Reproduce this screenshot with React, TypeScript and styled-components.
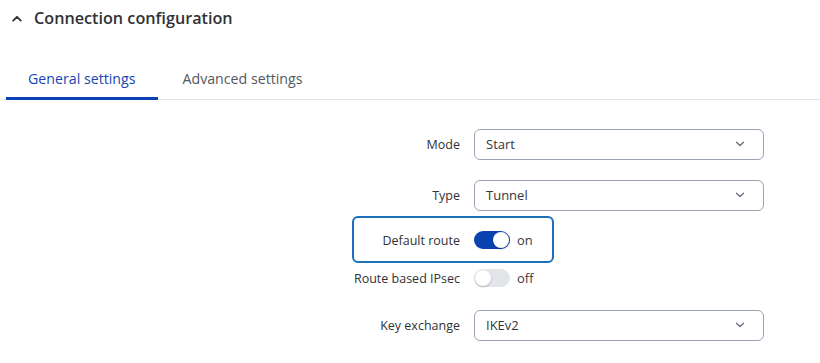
import React, { useState } from 'react';
import styled, { createGlobalStyle } from 'styled-components';

const GlobalStyle = createGlobalStyle`
  body {
    margin: 0;
    background: #ffffff;
    font-family: 'Open Sans', 'Noto Sans', sans-serif;
    color: #2f3236;
  }
`;

type SelectFieldProps = { label: string; value: string; gap: number };

const SelectField: React.FC<SelectFieldProps> = ({ label, value, gap }) => (
  <Row $gap={gap}>
    <Label>{label}</Label>
    <Select>
      <span>{value}</span>
      <svg width="10" height="6" viewBox="0 0 10 6">
        <path d="M1.5 1.2 L5 4.6 L8.5 1.2" fill="none" stroke="#6b7280" strokeWidth="1.4" strokeLinecap="round" strokeLinejoin="round" />
      </svg>
    </Select>
  </Row>
);

type ToggleFieldProps = { label: string; initial: boolean; gap: number; highlighted?: boolean };

const ToggleField: React.FC<ToggleFieldProps> = ({ label, initial, gap, highlighted }) => {
  const [on, setOn] = useState(initial);
  return (
    <Row $gap={gap} $highlighted={highlighted}>
      <Label>{label}</Label>
      <ToggleWrap>
        <Switch $on={on} onClick={() => setOn(!on)}>
          <Knob $on={on} />
        </Switch>
        <State>{on ? 'on' : 'off'}</State>
      </ToggleWrap>
    </Row>
  );
};

const App: React.FC = () => {
  const [tab, setTab] = useState(0);
  return (
    <>
      <GlobalStyle />
      <Page>
        <SectionHeader>
          <svg width="10" height="7" viewBox="0 0 10 7">
            <path d="M1.2 5.6 L5 1.8 L8.8 5.6" fill="none" stroke="#2f3236" strokeWidth="1.8" strokeLinecap="round" strokeLinejoin="round" />
          </svg>
          <Title>Connection configuration</Title>
        </SectionHeader>
        <Tabs>
          <Tab $active={tab === 0} onClick={() => setTab(0)}>General settings</Tab>
          <Tab $active={tab === 1} onClick={() => setTab(1)}>Advanced settings</Tab>
        </Tabs>
        <Form>
          <SelectField label="Mode" value="Start" gap={0} />
          <SelectField label="Type" value="Tunnel" gap={19} />
          <ToggleField label="Default route" initial={true} gap={13} highlighted />
          <ToggleField label="Route based IPsec" initial={false} gap={6} />
          <SelectField label="Key exchange" value="IKEv2" gap={15} />
        </Form>
      </Page>
    </>
  );
};

export default App;

const Page = styled.div`
  width: 820px;
  height: 363px;
  overflow: hidden;
`;

const SectionHeader = styled.div`
  display: flex;
  align-items: center;
  gap: 12px;
  height: 36px;
  padding-left: 12px;
`;

const Title = styled.h2`
  margin: 0;
  font-size: 16.2px;
  font-weight: 600;
  color: #2f3236;
`;

const Tabs = styled.div`
  display: flex;
  gap: 3px;
  margin-top: 22px;
  padding-left: 6px;
  border-bottom: 1px solid #e3e5e8;
`;

const Tab = styled.button<{ $active?: boolean }>`
  height: 42px;
  margin-bottom: -1px;
  padding: 1px 22px 0 22px;
  background: none;
  border: none;
  border-bottom: 3px solid ${p => (p.$active ? '#0a43b3' : 'transparent')};
  font-family: inherit;
  font-size: 14.2px;
  color: ${p => (p.$active ? '#1746b0' : '#54585e')};
  cursor: pointer;
`;

const Form = styled.div`
  display: flex;
  flex-direction: column;
  padding-top: 28px;
`;

const Row = styled.div<{ $gap: number; $highlighted?: boolean }>`
  position: relative;
  display: grid;
  grid-template-columns: 200px 290px;
  column-gap: 14px;
  align-items: center;
  height: 32px;
  margin-top: ${p => p.$gap}px;
  padding-left: 260px;

  &::before {
    content: '';
    display: ${p => (p.$highlighted ? 'block' : 'none')};
    position: absolute;
    left: 352px;
    top: -8px;
    width: 202px;
    height: 47px;
    box-sizing: border-box;
    border: 2px solid #1c6fb9;
    border-radius: 6px;
    pointer-events: none;
  }
`;

const Label = styled.label`
  text-align: right;
  font-size: 12.5px;
  color: #2f3236;
`;

const Select = styled.div`
  display: flex;
  align-items: center;
  justify-content: space-between;
  box-sizing: border-box;
  height: 31px;
  padding: 0 18px 0 11px;
  border: 1px solid #9ba5b4;
  border-radius: 6px;
  font-size: 13px;
  color: #33363a;
`;

const ToggleWrap = styled.div`
  display: flex;
  align-items: center;
  gap: 7px;
`;

const Switch = styled.button<{ $on: boolean }>`
  position: relative;
  width: 36px;
  height: 18px;
  padding: 0;
  border: none;
  border-radius: 9px;
  background: ${p => (p.$on ? '#0a42b1' : '#e2e5ea')};
  cursor: pointer;
`;

const Knob = styled.span<{ $on: boolean }>`
  position: absolute;
  top: 1px;
  left: ${p => (p.$on ? '19px' : '1px')};
  width: 16px;
  height: 16px;
  border-radius: 50%;
  background: #ffffff;
  box-shadow: 0 1px 2px rgba(0, 0, 0, 0.25);
`;

const State = styled.span`
  font-size: 13px;
  color: #3a3d42;
`;
